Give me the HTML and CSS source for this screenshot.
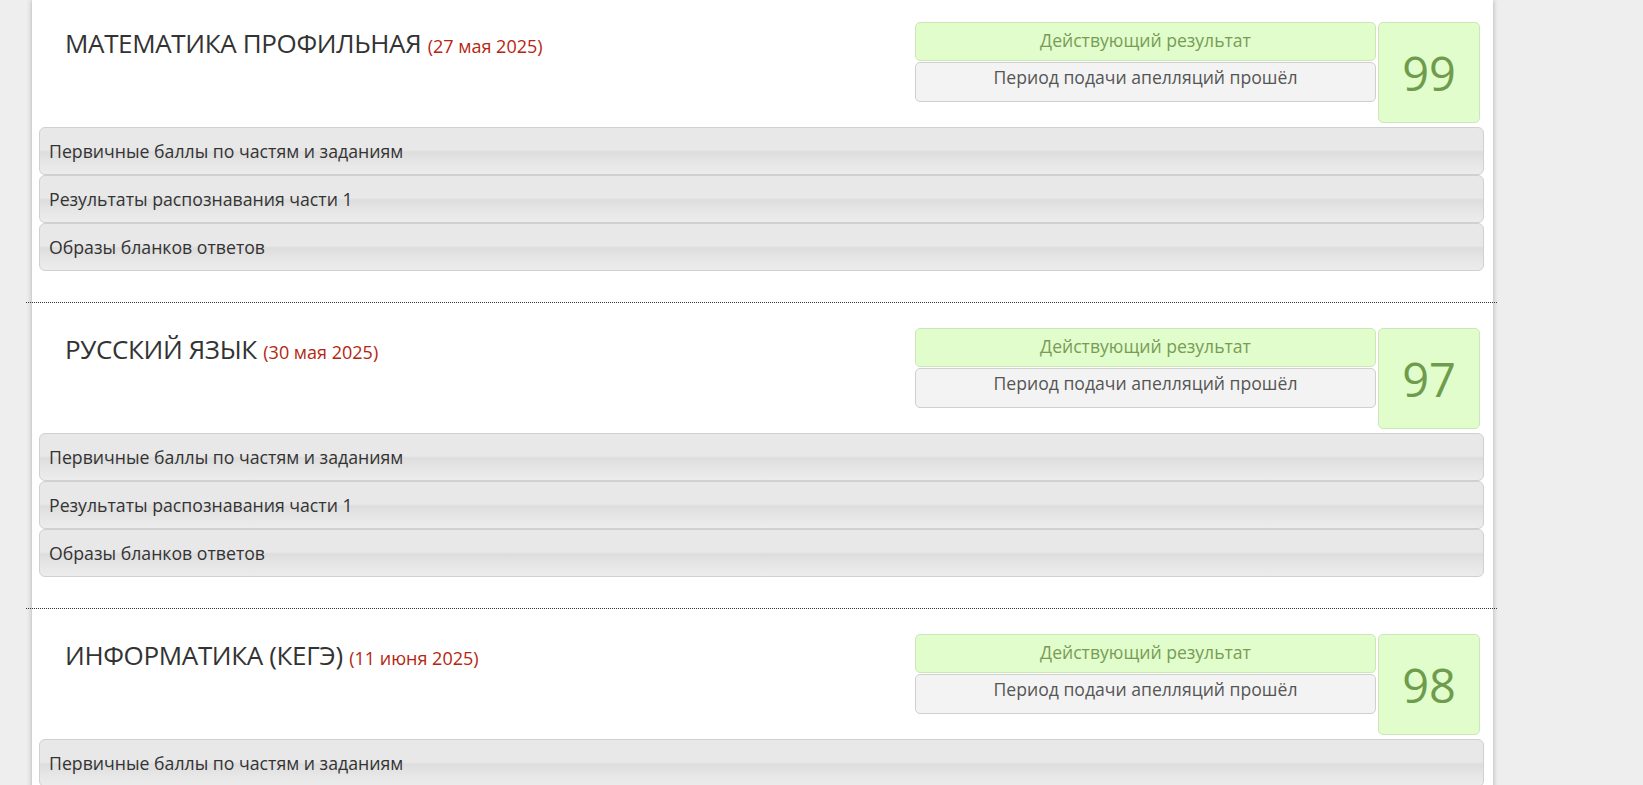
FILE: index.html
```html
<!DOCTYPE html>
<html lang="ru">
<head>
<meta charset="utf-8">
<title>Результаты экзаменов</title>
<link rel="stylesheet" href="styles.css">
</head>
<body>
<div class="page">
  <section class="exam">
    <div class="exam-head">
      <h2 class="exam-title">МАТЕМАТИКА ПРОФИЛЬНАЯ <span class="exam-date">(27 мая 2025)</span></h2>
      <div class="result">
        <div class="result-status">
          <div class="status status-active">Действующий результат</div>
          <div class="status status-appeal">Период подачи апелляций прошёл</div>
        </div>
        <div class="score">99</div>
      </div>
    </div>
    <div class="accordion">
      <div class="acc-head">Первичные баллы по частям и заданиям</div>
      <div class="acc-head">Результаты распознавания части 1</div>
      <div class="acc-head">Образы бланков ответов</div>
    </div>
  </section>
  <hr class="sep">
  <section class="exam">
    <div class="exam-head">
      <h2 class="exam-title">РУССКИЙ ЯЗЫК <span class="exam-date">(30 мая 2025)</span></h2>
      <div class="result">
        <div class="result-status">
          <div class="status status-active">Действующий результат</div>
          <div class="status status-appeal">Период подачи апелляций прошёл</div>
        </div>
        <div class="score">97</div>
      </div>
    </div>
    <div class="accordion">
      <div class="acc-head">Первичные баллы по частям и заданиям</div>
      <div class="acc-head">Результаты распознавания части 1</div>
      <div class="acc-head">Образы бланков ответов</div>
    </div>
  </section>
  <hr class="sep">
  <section class="exam">
    <div class="exam-head">
      <h2 class="exam-title">ИНФОРМАТИКА (КЕГЭ) <span class="exam-date">(11 июня 2025)</span></h2>
      <div class="result">
        <div class="result-status">
          <div class="status status-active">Действующий результат</div>
          <div class="status status-appeal">Период подачи апелляций прошёл</div>
        </div>
        <div class="score">98</div>
      </div>
    </div>
    <div class="accordion">
      <div class="acc-head">Первичные баллы по частям и заданиям</div>
      <div class="acc-head">Результаты распознавания части 1</div>
      <div class="acc-head">Образы бланков ответов</div>
    </div>
  </section>
</div>
</body>
</html>
```
FILE: styles.css
```css
html, body {
  margin: 0;
  padding: 0;
}
body {
  background: #eeeeee;
  font-family: "Open Sans", "Noto Sans", "DejaVu Sans", sans-serif;
  color: #333;
  overflow: hidden;
}
.page {
  margin-left: 32px;
  width: 1461px;
  min-height: 1000px;
  background: #ffffff;
  box-shadow: 0 0 5px rgba(0, 0, 0, 0.28);
}
.exam {
  padding: 25px 0 31px;
}
.exam:first-child {
  padding-top: 22px;
}
.exam-head {
  display: flex;
  justify-content: space-between;
  align-items: flex-start;
  padding: 0 13px 0 33px;
}
.exam-title {
  margin: 7px 0 0;
  font-weight: normal;
  font-size: 26px;
  letter-spacing: -0.35px;
  line-height: 28px;
  color: #333;
}
.exam-date {
  font-size: 18px;
  letter-spacing: 0;
  color: #b4260f;
}
.result {
  display: flex;
  gap: 2px;
}
.result-status {
  display: flex;
  flex-direction: column;
  gap: 1px;
  width: 461px;
}
.status {
  box-sizing: border-box;
  height: 39px;
  border: 1px solid;
  border-radius: 5px;
  text-align: center;
  font-size: 17.6px;
  line-height: 20px;
}
.status-active {
  background: #e0fdcb;
  border-color: #cce6b8;
  color: #789c56;
  padding-top: 7px;
}
.status-appeal {
  height: 40px;
  background: #f3f3f3;
  border-color: #cfcfcf;
  color: #555;
  padding-top: 4px;
}
.score {
  box-sizing: border-box;
  width: 102px;
  height: 101px;
  display: flex;
  align-items: center;
  justify-content: center;
  background: #e0fdcb;
  border: 1px solid #cce6b8;
  border-radius: 5px;
  font-size: 47px;
  color: #6f9b4d;
}
.accordion {
  margin: 4px 9px 0 7px;
}
.acc-head {
  box-sizing: border-box;
  height: 48px;
  padding: 12px 10px 12px 9px;
  border: 1px solid #d0d0d0;
  border-radius: 6px;
  background: linear-gradient(to bottom, #e8e8e8 0%, #e8e8e8 48%, #dddddd 52%, #e6e6e6 75%, #ececec 100%);
  font-size: 17.7px;
  line-height: 22px;
  color: #333;
}
.sep {
  margin: 0 -4px 0 -6px;
  height: 0;
  border: 0;
  border-top: 1px dotted #333;
}
```
